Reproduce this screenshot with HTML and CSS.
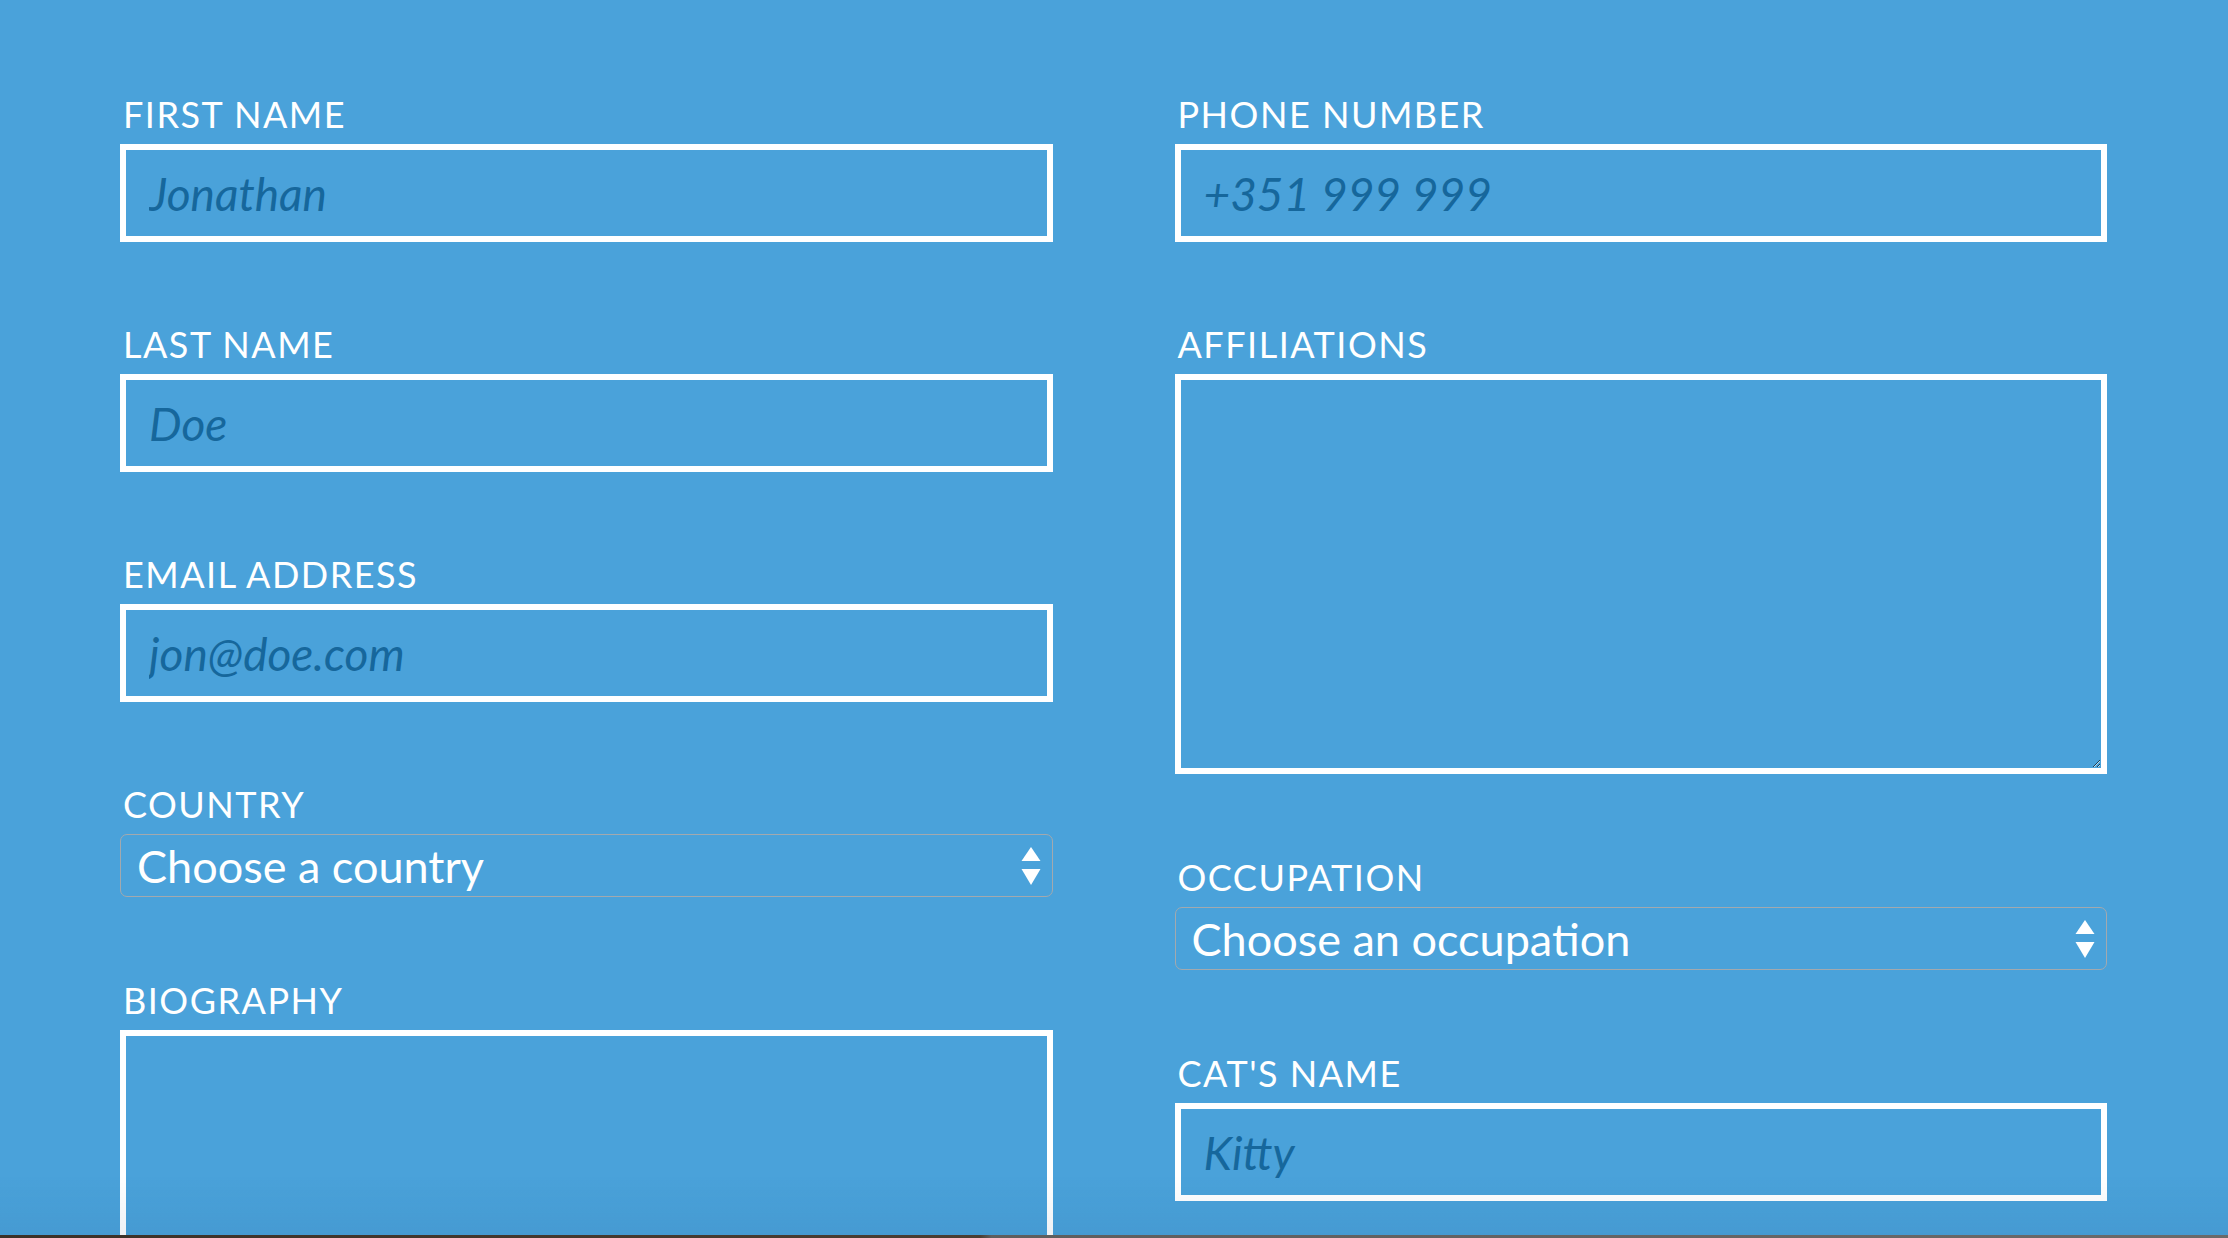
FILE: index.html
```html
<!DOCTYPE html>
<html lang="en">
<head>
<meta charset="utf-8">
<title>Form</title>
<link rel="stylesheet" href="styles.css">
</head>
<body>
<main class="form">
  <div class="col">
    <div class="field">
      <label class="label" for="first">FIRST NAME</label>
      <input class="text" id="first" type="text" placeholder="Jonathan">
    </div>
    <div class="field">
      <label class="label" for="last">LAST NAME</label>
      <input class="text" id="last" type="text" placeholder="Doe">
    </div>
    <div class="field">
      <label class="label" for="email">EMAIL ADDRESS</label>
      <input class="text" id="email" type="email" placeholder="jon@doe.com">
    </div>
    <div class="field field-tall">
      <label class="label" for="country">COUNTRY</label>
      <div class="select-wrap">
        <select class="select" id="country">
          <option>Choose a country</option>
        </select>
        <svg class="arrows" width="20" height="38" viewBox="0 0 20 38" aria-hidden="true">
          <polygon points="10,0 19.5,14 0.5,14" fill="#fff"/>
          <polygon points="0.5,22 19.5,22 10,38" fill="#fff"/>
        </svg>
      </div>
    </div>
    <div class="field">
      <label class="label" for="bio">BIOGRAPHY</label>
      <textarea class="text area" id="bio"></textarea>
    </div>
  </div>
  <div class="col">
    <div class="field">
      <label class="label" for="phone">PHONE NUMBER</label>
      <input class="text" id="phone" type="tel" placeholder="+351 999 999">
    </div>
    <div class="field field-tall">
      <label class="label" for="aff">AFFILIATIONS</label>
      <textarea class="text area" id="aff"></textarea>
    </div>
    <div class="field field-tall">
      <label class="label" for="occ">OCCUPATION</label>
      <div class="select-wrap">
        <select class="select" id="occ">
          <option>Choose an occupation</option>
        </select>
        <svg class="arrows" width="20" height="38" viewBox="0 0 20 38" aria-hidden="true">
          <polygon points="10,0 19.5,14 0.5,14" fill="#fff"/>
          <polygon points="0.5,22 19.5,22 10,38" fill="#fff"/>
        </svg>
      </div>
    </div>
    <div class="field">
      <label class="label" for="cat">CAT'S NAME</label>
      <input class="text" id="cat" type="text" placeholder="Kitty">
    </div>
  </div>
</main>
<div class="shade"></div>
<div class="edge"></div>
</body>
</html>
```
FILE: styles.css
```css
html, body {
  margin: 0;
  height: 100%;
  overflow: hidden;
  background: #4aa2da;
}

body {
  font-family: Lato, "Open Sans", "Liberation Sans", sans-serif;
}

.form {
  display: grid;
  grid-template-columns: 1fr 1fr;
  column-gap: 122px;
  padding: 90px 121px 0 120px;
}

.col {
  display: flex;
  flex-direction: column;
}

.field {
  display: flex;
  flex-direction: column;
  margin-bottom: 78px;
}

.field-tall {
  margin-bottom: 79px;
}

.label {
  font-size: 36px;
  line-height: 43px;
  letter-spacing: 1.5px;
  color: #ffffff;
  padding: 3px 0 0 3px;
  margin-bottom: 8px;
}

.text {
  box-sizing: border-box;
  height: 98px;
  margin: 0;
  border: 6px solid #ffffff;
  border-radius: 0;
  background: transparent;
  padding: 0 20px 0 23px;
  font-family: Lato, "Open Sans", sans-serif;
  font-style: italic;
  font-size: 46px;
  color: #16679c;
  outline: none;
}

.text::placeholder {
  color: #16679c;
  opacity: 1;
}

.area {
  display: block;
  height: 400px;
  padding: 20px;
  resize: both;
}

.select-wrap {
  position: relative;
}

.select {
  -webkit-appearance: none;
  appearance: none;
  box-sizing: border-box;
  width: 100%;
  height: 63px;
  margin: 0;
  padding: 0 50px 0 16px;
  border: 1px solid #a3a9ae;
  border-radius: 7px;
  background: transparent;
  font-family: Lato, "Open Sans", sans-serif;
  font-size: 45px;
  color: #ffffff;
  outline: none;
}

.arrows {
  position: absolute;
  right: 12px;
  top: 13px;
  pointer-events: none;
}

.shade {
  position: fixed;
  left: 0;
  right: 0;
  bottom: 3px;
  height: 60px;
  background: linear-gradient(to bottom, rgba(20, 60, 110, 0), rgba(20, 60, 110, 0.07));
  pointer-events: none;
}

.edge {
  position: fixed;
  left: 0;
  right: 0;
  bottom: 0;
  height: 3px;
  background: linear-gradient(90deg, #3b3128 0, #4a3e33 44%, #5e5e5e 44.5%, #6a6a6a 100%);
  pointer-events: none;
}
```
